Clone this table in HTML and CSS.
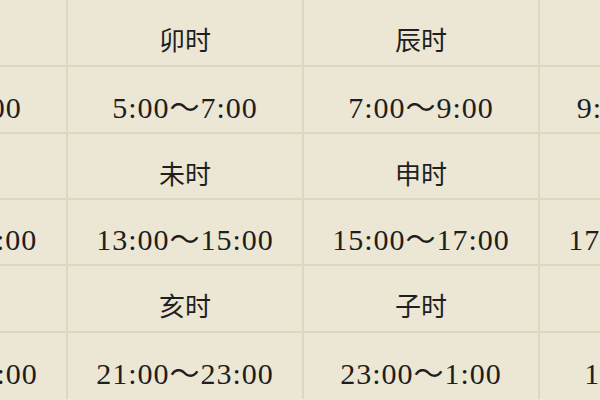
FILE: index.html
```html
<!DOCTYPE html>
<html lang="zh">
<head>
<meta charset="utf-8">
<title>十二时辰</title>
<link rel="stylesheet" href="styles.css">
</head>
<body>
<div class="table">
  <div class="cell head">寅时</div>
  <div class="cell head">卯时</div>
  <div class="cell head">辰时</div>
  <div class="cell head">巳时</div>
  <div class="cell time">3:00～5:00</div>
  <div class="cell time">5:00～7:00</div>
  <div class="cell time">7:00～9:00</div>
  <div class="cell time">9:00～11:00</div>
  <div class="cell head">午时</div>
  <div class="cell head">未时</div>
  <div class="cell head">申时</div>
  <div class="cell head">酉时</div>
  <div class="cell time">11:00～13:00</div>
  <div class="cell time">13:00～15:00</div>
  <div class="cell time">15:00～17:00</div>
  <div class="cell time">17:00～19:00</div>
  <div class="cell head">戌时</div>
  <div class="cell head">亥时</div>
  <div class="cell head">子时</div>
  <div class="cell head">丑时</div>
  <div class="cell time">19:00～21:00</div>
  <div class="cell time">21:00～23:00</div>
  <div class="cell time">23:00～1:00</div>
  <div class="cell time">1:00～3:00</div>
</div>
</body>
</html>
```

FILE: styles.css
```css
html, body {
  margin: 0;
  padding: 0;
  background: #ece6d4;
  overflow: hidden;
}
body {
  width: 600px;
  height: 400px;
}
.table {
  display: grid;
  grid-template-columns: repeat(4, 234px);
  grid-template-rows: 66px 65px 64px 64px 65px 66px;
  gap: 2px;
  background: #ddd6c1;
  width: max-content;
  margin-left: -168px;
  margin-top: -1px;
}
.cell {
  background: #ece6d4;
  display: flex;
  align-items: center;
  justify-content: center;
  padding-top: 12px;
  box-sizing: border-box;
  white-space: nowrap;
}
.head {
  font-family: "Noto Sans CJK SC", "Noto Sans", sans-serif;
  font-size: 26px;
  font-weight: 400;
  color: #1f1f1f;
}
.time {
  font-family: "Liberation Serif", "Noto Sans CJK SC", serif;
  font-size: 30px;
  letter-spacing: 1px;
  color: #1e1e1e;
  padding-top: 10px;
}
```
